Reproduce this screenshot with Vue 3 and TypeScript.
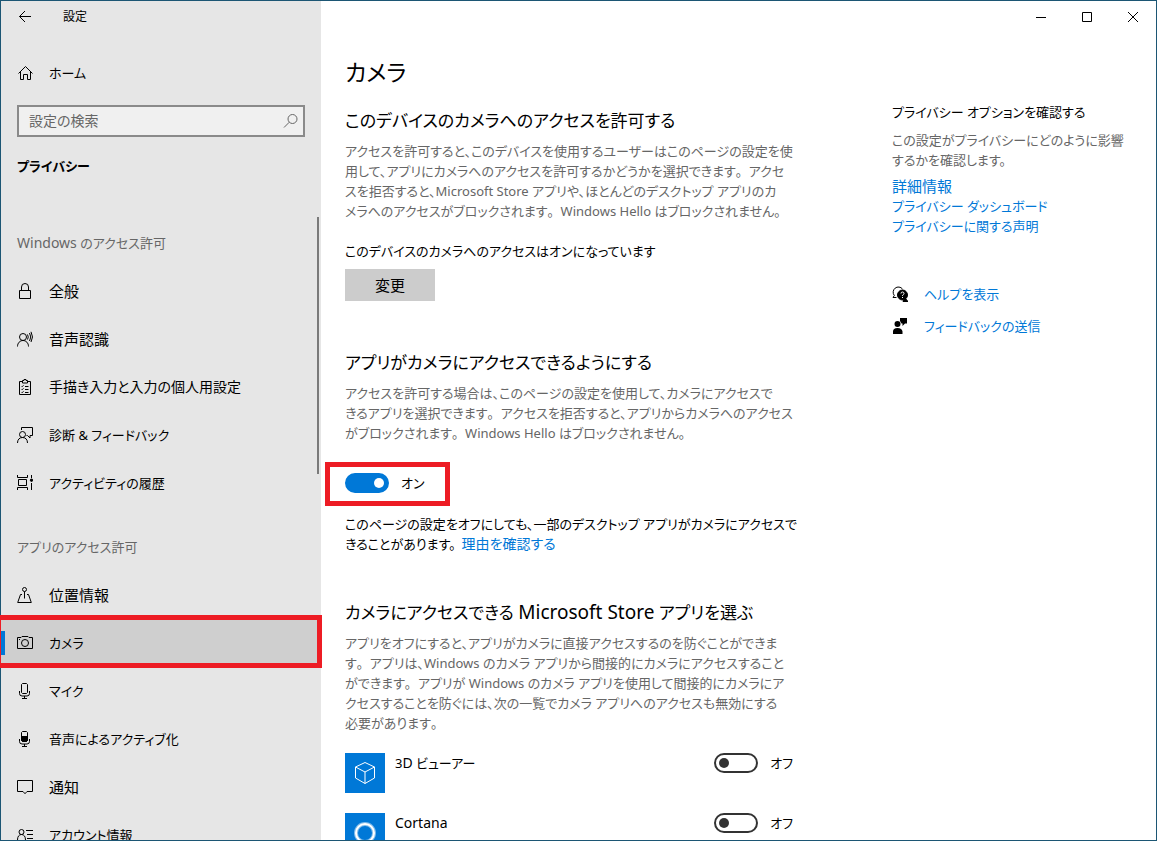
<script setup lang="ts">
import { h, reactive, ref } from 'vue'

interface Icon {
  stroke: string
  fill?: string
}
interface NavItem {
  label: string
  icon: Icon
  selected?: boolean
}
interface NavGroup {
  title: string
  items: NavItem[]
}

const groups: NavGroup[] = [
  {
    title: 'Windows のアクセス許可',
    items: [
      { label: '全般', icon: { stroke: 'M2.5 7.5h11v8h-11zM4.5 7.5V4a3.5 3.5 0 0 1 7 0v3.5' } },
      {
        label: '音声認識',
        icon: {
          stroke:
            'M6 2.5a3.5 3.5 0 1 1 0 7a3.5 3.5 0 0 1 0-7M.5 15.5c0-3.500 2.500-6 5.500-6s5.500 2.500 5.500 6M10.500 3.500q1.500 2.500 0 5M12.500 2q2.500 4 0 8M14 .8q3 5.200 0 10.200',
        },
      },
      {
        label: '手描き入力と入力の個人用設定',
        icon: {
          stroke:
            'M5 2.500H2.500v13h11v-13H11M5.500 1.500h1.500V.5h2v1h1.500v2.500h-5zM4.500 7l.7.7L6.500 6.300M4.500 10l.7.7L6.500 9.300M4.500 13l.7.7L6.500 12.300M8 7.500h3.500M8 10.500h3.500M8 13.500h3.500',
        },
      },
      {
        label: '診断 & フィードバック',
        icon: {
          stroke:
            'M5.500 4.500a3 3 0 1 1 0 6a3 3 0 0 1 0-6M.5 16c0-3.500 2-5.500 5-5.500s5 2 5 5.500M4.500 3V.5h11v8H13v2.500l-2.500-2.500H9.500',
        },
      },
      {
        label: 'アクティビティの履歴',
        icon: {
          stroke: 'M.5 0v2.500h10V0M.5 15v-2.500h10V15M1.500 4.500h8v6h-8zM14.500 0v3M14.500 8v7',
          fill: 'M14.500 4a1.200 1.200 0 1 1 0 2.400a1.200 1.200 0 0 1 0-2.400z',
        },
      },
    ],
  },
  {
    title: 'アプリのアクセス許可',
    items: [
      {
        label: '位置情報',
        icon: { stroke: 'M7.500.5a2 2 0 1 1 0 4a2 2 0 0 1 0-4M7.500 4.500v7M5 7.500H3.500L.7 15.500h13.600L11.500 7.500H10' },
      },
      {
        label: 'カメラ',
        selected: true,
        icon: {
          stroke: 'M.5 2.500H4l1-1h6l1 1h3.500v11H.5zM8 4.500a3.500 3.500 0 1 1 0 7a3.500 3.500 0 0 1 0-7M2 4.500h1',
        },
      },
      {
        label: 'マイク',
        icon: { stroke: 'M4.500 1.500l1-1h4l1 1v8l-1 1h-4l-1-1zM2.500 8v2.500q0 2.500 2.500 2.500h5q2.500 0 2.500-2.500V8M7.500 13v2.500M5 15.500h5' },
      },
      {
        label: '音声によるアクティブ化',
        icon: {
          stroke: 'M4.500 1.500l1-1h4l1 1v8l-1 1h-4l-1-1zM2.500 8v2.500q0 2.500 2.500 2.500h5q2.500 0 2.500-2.500V8M7.500 13v2.500M5 15.500h5',
          fill: 'M4.500 5.500h6v4l-1 1h-4l-1-1z',
        },
      },
      { label: '通知', icon: { stroke: 'M.5 1.500h15v11H10L8 14.700L6 12.500H.5z' } },
      {
        label: 'アカウント情報',
        icon: { stroke: 'M4.500 2.500a2.500 2.500 0 1 1 0 5a2.500 2.500 0 0 1 0-5M.5 13c0-3.500 1.500-5.500 4-5.500s4 2 4 5.500M9 3.500h7M10 7.500h6M10 11.500h6' },
      },
    ],
  },
]

const deviceText = [
  'アクセスを許可すると、このデバイスを使用するユーザーはこのページの設定を使',
  '用して、アプリにカメラへのアクセスを許可するかどうかを選択できます。アクセ',
  'スを拒否すると、Microsoft Store アプリや、ほとんどのデスクトップ アプリのカ',
  'メラへのアクセスがブロックされます。Windows Hello はブロックされません。',
]
const appText = [
  'アクセスを許可する場合は、このページの設定を使用して、カメラにアクセスで',
  'きるアプリを選択できます。アクセスを拒否すると、アプリからカメラへのアクセス',
  'がブロックされます。Windows Hello はブロックされません。',
]
const storeText = [
  'アプリをオフにすると、アプリがカメラに直接アクセスするのを防ぐことができま',
  'す。アプリは、Windows のカメラ アプリから間接的にカメラにアクセスすること',
  'ができます。アプリが Windows のカメラ アプリを使用して間接的にカメラにア',
  'クセスすることを防ぐには、次の一覧でカメラ アプリへのアクセスも無効にする',
  '必要があります。',
]
const asideText = ['この設定がプライバシーにどのように影響', 'するかを確認します。']

// Kana is set proportionally; full stops keep their full width and Latin words get their own class.
function MixedText(props: { text: string }) {
  return props.text
    .split(/(。|[A-Za-z]+(?: [A-Za-z]+)*)/)
    .filter((part) => part !== '')
    .map((part) => {
      if (part === '。') return h('span', { class: 'full-stop' }, part)
      return /^[A-Za-z]/.test(part) ? h('span', { class: 'latin' }, part) : part
    })
}
MixedText.props = ['text']

// Labels in kanji are set larger than those made up mostly of kana.
function labelSize(label: string): string {
  const share = (label.match(/[一-龯]/g) ?? []).length / label.length
  if (share === 1) return 'kanji'
  return share > 0.6 ? 'mostly-kanji' : ''
}

const query = ref('')
const allowApps = ref(true)
const apps = reactive([
  { id: 'viewer', name: '3D ビューアー', on: false },
  { id: 'cortana', name: 'Cortana', on: false },
])
</script>

<template>
  <div class="window">
    <aside class="sidebar">
      <header class="titlebar">
        <button class="back" aria-label="戻る">
          <svg width="16" height="16" viewBox="0 0 16 16"><path d="M14 7.500H2.500M8 2L2.500 7.500L8 13" /></svg>
        </button>
        <span class="app-title">設定</span>
      </header>
      <a class="nav-row home" href="#home">
        <svg width="16" height="16" viewBox="0 0 16 16">
          <path d="M1.500 8.500L8.500 1.500l7 7M3.500 7v7.500h3v-5h4v5h3V7" />
        </svg>
        <span>ホーム</span>
      </a>
      <label class="search">
        <input v-model="query" type="text" placeholder="設定の検索" aria-label="設定の検索" />
        <svg width="16" height="16" viewBox="0 0 16 16">
          <path d="M9.500 1.500a4.500 4.500 0 1 1 0 9a4.500 4.500 0 0 1 0-9M6.300 9.200L1 14.500" />
        </svg>
      </label>
      <h2 class="section">プライバシー</h2>
      <nav class="nav">
        <div class="scroll-thumb"></div>
        <template v-for="group in groups" :key="group.title">
          <h3 class="group-title"><MixedText :text="group.title" /></h3>
          <a
            v-for="item in group.items"
            :key="item.label"
            class="nav-row"
            :class="[labelSize(item.label), { selected: item.selected }]"
            href="#"
          >
            <svg width="16" height="16" viewBox="0 0 16 16">
              <path :d="item.icon.stroke" />
              <path v-if="item.icon.fill" class="solid" :d="item.icon.fill" />
            </svg>
            <span>{{ item.label }}</span>
          </a>
        </template>
      </nav>
    </aside>

    <div class="content">
      <div class="window-controls">
        <button aria-label="最小化"><svg width="12" height="12" viewBox="0 0 12 12"><path d="M1 6.500h10" /></svg></button>
        <button aria-label="最大化"><svg width="12" height="12" viewBox="0 0 12 12"><path d="M1.500 1.500h9v9h-9z" /></svg></button>
        <button aria-label="閉じる"><svg width="12" height="12" viewBox="0 0 12 12"><path d="M1 1l10 10M11 1L1 11" /></svg></button>
      </div>
      <div class="columns">
        <main class="main">
          <h1>カメラ</h1>
          <section>
            <h2>このデバイスのカメラへのアクセスを許可する</h2>
            <p class="muted">
              <span v-for="line in deviceText" :key="line" class="line"><MixedText :text="line" /></span>
            </p>
            <p class="status">このデバイスのカメラへのアクセスはオンになっています</p>
            <button class="change kanji">変更</button>
          </section>
          <section class="app-section">
            <h2>アプリがカメラにアクセスできるようにする</h2>
            <p class="muted">
              <span v-for="line in appText" :key="line" class="line"><MixedText :text="line" /></span>
            </p>
            <label class="toggle marked">
              <input v-model="allowApps" type="checkbox" role="switch" />
              <span>{{ allowApps ? 'オン' : 'オフ' }}</span>
            </label>
            <p>
              <span class="line">このページの設定をオフにしても、一部のデスクトップ アプリがカメラにアクセスで</span>
              <span class="line">きることがあります。<a class="reason" href="#reason">理由を確認する</a></span>
            </p>
          </section>
          <section class="store-section">
            <h2><MixedText text="カメラにアクセスできる Microsoft Store アプリを選ぶ" /></h2>
            <p class="muted">
              <span v-for="line in storeText" :key="line" class="line"><MixedText :text="line" /></span>
            </p>
            <ul class="apps">
              <li v-for="app in apps" :key="app.id">
                <div class="tile">
                  <svg v-if="app.id === 'viewer'" width="24" height="24" viewBox="0 0 24 24">
                    <path d="M12 1.500L21.500 6v11L12 22.500L2.500 17V6zM2.500 6L12 11l9.500-5M12 11v11.500" />
                  </svg>
                  <svg v-else width="24" height="24" viewBox="0 0 24 24">
                    <circle class="halo" cx="12" cy="12" r="9" />
                    <circle class="ring" cx="12" cy="12" r="9" />
                  </svg>
                </div>
                <label class="app-name" :for="app.id"><MixedText :text="app.name" /></label>
                <label class="toggle">
                  <input :id="app.id" v-model="app.on" type="checkbox" role="switch" />
                  <span>{{ app.on ? 'オン' : 'オフ' }}</span>
                </label>
              </li>
            </ul>
          </section>
        </main>

        <aside class="related">
          <h3>プライバシー オプションを確認する</h3>
          <p class="muted"><span v-for="line in asideText" :key="line" class="line">{{ line }}</span></p>
          <div class="links">
            <a class="kanji" href="#details">詳細情報</a>
            <a href="#dashboard">プライバシー ダッシュボード</a>
            <a href="#statement">プライバシーに関する声明</a>
          </div>
          <div class="support">
            <a href="#help">
              <svg width="16" height="16" viewBox="0 0 16 16">
                <path d="M4.500 11.500H1L2.300 9.500A5 5 0 1 1 10.500 3" />
                <path class="solid" d="M10.500 4a5 5 0 1 1 0 10a5 5 0 0 1 0-10zM13 12l3 3.500h-5z" />
                <path class="knockout" d="M9 7.500q0-1.500 1.500-1.500T12 7.500q0 .8-.8 1.200t-.7 1.300M10.500 11v1" />
              </svg>
              <span>ヘルプを表示</span>
            </a>
            <a href="#feedback">
              <svg width="16" height="16" viewBox="0 0 16 16">
                <path class="solid bare" d="M5.500 3a3 3 0 1 1 0 6a3 3 0 0 1 0-6zM1 16v-2.500Q1 10 5.500 10t5 3.500V16zM8 0h7v5.500h-2L10.500 8V5.500H9.500L8 3z" />
              </svg>
              <span>フィードバックの送信</span>
            </a>
          </div>
        </aside>
      </div>
    </div>
  </div>
</template>

<style>
body {
  margin: 0;
}
.full-stop {
  font-feature-settings: normal;
}
h2 .latin {
  font-size: 19px;
}
h3 .latin,
.app-name .latin {
  font-size: 14px;
}
</style>

<style scoped>
*,
*::before,
*::after {
  box-sizing: border-box;
}
.window {
  position: relative;
  display: flex;
  height: 100vh;
  padding: 1px;
  overflow: hidden;
  background: #1c5674;
  color: #000;
  font-family: 'Noto Sans', 'Noto Sans CJK JP', sans-serif;
  font-size: 13px;
  line-height: 20px;
  font-feature-settings: 'palt';
  white-space: nowrap;
}
.window::after {
  content: '';
  position: absolute;
  z-index: 3;
  inset: auto 0 0;
  height: 1px;
  background: #1c5674;
}
h1,
h2,
h3,
p,
ul {
  margin: 0;
  padding: 0;
  font-weight: 400;
}
h3 {
  font-size: 13px;
}
a {
  color: #0078d7;
  text-decoration: none;
}
button {
  border: 0;
  background: none;
  font: inherit;
  color: inherit;
}
svg {
  flex: none;
  display: block;
  fill: none;
  stroke: #000;
}
.solid {
  fill: #000;
}
.bare {
  stroke: none;
}
.knockout {
  stroke: #fff;
}
.sidebar {
  position: relative;
  z-index: 1;
  flex: 0 0 320px;
  background: #e6e6e6;
}
.titlebar {
  display: flex;
  align-items: center;
  height: 32px;
  margin-bottom: 16px;
}
.back {
  width: 48px;
  padding: 0 16px;
}
.app-title {
  padding-left: 14px;
  font-size: 12px;
}
.nav-row {
  position: relative;
  display: flex;
  align-items: center;
  gap: 16px;
  height: 48px;
  padding: 0 16px;
  color: #000;
}
.kanji {
  font-size: 15px;
}
.mostly-kanji {
  font-size: 14px;
}
.search {
  display: flex;
  align-items: center;
  height: 32px;
  margin: 8px 16px 4px;
  padding: 0 4px 0 10px;
  border: 2px solid #8a8a8a;
  background: #f0f0f0;
}
.search input {
  flex: 1;
  min-width: 0;
  padding: 0;
  border: 0;
  outline: 0;
  background: none;
  font: inherit;
  font-size: 14px;
}
.search input::placeholder {
  color: #666;
  opacity: 1;
}
.search svg {
  stroke: #666;
}
.section {
  padding: 0 16px;
  font-size: 13px;
  font-weight: 700;
  line-height: 50px;
}
.nav {
  position: relative;
  padding-top: 12px;
}
.scroll-thumb {
  position: absolute;
  top: 26px;
  right: 2px;
  width: 2px;
  height: 257px;
  background: #7a7a7a;
}
.group-title {
  height: 64px;
  padding: 30px 16px 0;
  color: #666;
}
.selected {
  background: #cfcfcf;
}
.selected::before {
  content: '';
  position: absolute;
  left: 0;
  width: 4px;
  height: 24px;
  background: #0078d7;
}
.selected::after {
  content: '';
  position: absolute;
  inset: -4px -1px -1px -5px;
  border: 5px solid #ed1c24;
}
.content {
  flex: 1;
  min-width: 0;
  background: #fff;
}
.window-controls {
  display: flex;
  justify-content: flex-end;
  height: 32px;
}
.window-controls button {
  display: grid;
  place-items: center;
  width: 46px;
}
.columns {
  display: grid;
  grid-template-columns: minmax(0, 448px) minmax(0, 240px);
  column-gap: 99px;
  padding: 19px 24px 0;
}
h1 {
  font-size: 23px;
  line-height: 40px;
}
.main h2 {
  font-size: 17px;
  line-height: 28px;
}
.main section:first-of-type {
  padding-top: 15px;
}
.line {
  display: block;
  height: 20px;
}
.muted {
  padding-top: 8px;
  color: #666;
}
.main .muted {
  padding-top: 6px;
}
.status {
  padding: 20px 0 8px;
}
.change {
  display: block;
  width: 90px;
  height: 32px;
  background: #ccc;
}
.app-section {
  padding-top: 48px;
}
.store-section {
  padding-top: 44px;
}
.reason {
  margin-left: 6px;
  font-size: 14px;
}
.toggle {
  position: relative;
  display: flex;
  align-items: center;
  gap: 12px;
  width: max-content;
  height: 20px;
}
.toggle input {
  appearance: none;
  display: flex;
  align-items: center;
  width: 44px;
  height: 20px;
  margin: 0;
  padding: 0 3px;
  border: 2px solid #333;
  border-radius: 10px;
}
.toggle input::before {
  content: '';
  width: 10px;
  height: 10px;
  border-radius: 50%;
  background: #333;
}
.toggle input:checked {
  justify-content: flex-end;
  border-color: #0078d7;
  background: #0078d7;
}
.toggle input:checked::before {
  background: #fff;
}
.marked {
  margin: 30px 0 21px;
}
.marked::after {
  content: '';
  position: absolute;
  top: -11px;
  left: -20px;
  width: 125px;
  height: 44px;
  border: 5px solid #ed1c24;
}
.apps {
  display: grid;
  row-gap: 20px;
  padding-top: 20px;
  list-style: none;
}
.apps li {
  display: flex;
  align-items: flex-start;
  gap: 10px;
  height: 40px;
}
.tile {
  display: grid;
  place-items: center;
  width: 40px;
  height: 40px;
  background: #0078d7;
}
.tile svg {
  stroke: #fff;
}
.halo {
  stroke: #7fbbea;
  stroke-width: 4;
}
.ring {
  stroke-width: 2;
}
.app-name {
  flex: 1;
}
.related {
  padding-top: 50px;
}
.links {
  display: grid;
  justify-items: start;
  padding-top: 6px;
}
.support {
  padding-top: 42px;
}
.support a {
  display: flex;
  align-items: center;
  gap: 16px;
  height: 32px;
}
</style>
